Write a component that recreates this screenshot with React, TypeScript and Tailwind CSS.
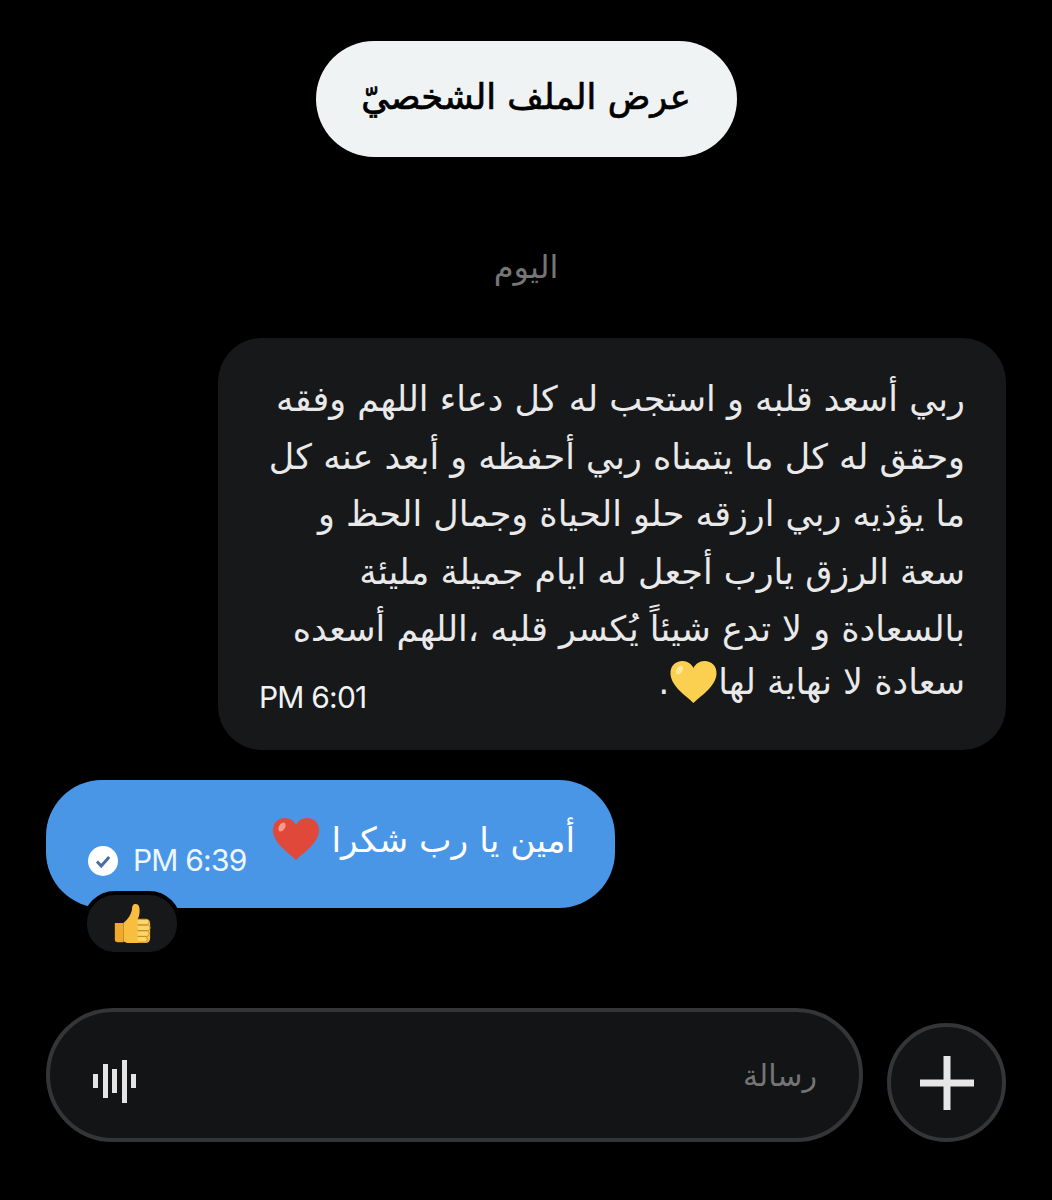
import React from 'react';

const arabic = "font-['DejaVu_Sans','Noto_Sans',sans-serif]";

const lines = [
  'ربي أسعد قلبه و استجب له كل دعاء اللهم وفقه',
  'وحقق له كل ما يتمناه ربي أحفظه و أبعد عنه كل',
  'ما يؤذيه ربي ارزقه حلو الحياة وجمال الحظ و',
  'سعة الرزق يارب أجعل له ايام جميلة مليئة',
  'بالسعادة و لا تدع شيئاً يُكسر قلبه ،اللهم أسعده',
];

function Heart({ color, shine, className }: { color: string; shine: string; className: string }) {
  return (
    <svg viewBox="0 0 48 44" className={className}>
      <path
        d="M24 43C17 36 2 27 1 14 0.5 6 6 1 13 1c5 0 9 3 11 7 2-4 6-7 11-7 7 0 12.500 5 12 13-1 13-16 22-23 29z"
        fill={color}
      />
      <ellipse cx="10" cy="10" rx="3" ry="5" transform="rotate(30 10 10)" fill={shine} />
    </svg>
  );
}

function ThumbsUp() {
  return (
    <svg viewBox="0 0 40 44" className="w-[40px] h-[42px]">
      <path d="M2 21h9v20H5c-2 0-3-1-3-3z" fill="#f0a92c" />
      <path
        d="M11 21c5-4 8-9 9-14 0-4 1-6 4-6 3 0 4 3 4 7 0 4-1 7-2 9h9c3 0 4 2 4 4v16c0 3-2 5-5 5H17c-3 0-4-1-6-2z"
        fill="#f9bd3f"
      />
      <path
        d="M26 17h9c2 0 3 2 3 3s-1 3-3 3h-9M26 23h10c2 0 3 2 3 3s-1 3-3 3H26M26 29h9c2 0 3 2 3 3s-1 3-3 3h-9M26 35h7c2 0 3 2 3 3s-1 3-3 3h-7"
        fill="#fdd66b"
        stroke="#c98a20"
        strokeWidth="1"
      />
    </svg>
  );
}

function CheckBadge() {
  return (
    <svg viewBox="0 0 30 30" className="w-[30px] h-[30px] shrink-0">
      <circle cx="15" cy="15" r="15" fill="#ffffff" />
      <path d="M9 15.500l4.200 4.500 8-9" fill="none" stroke="#4a6f9e" strokeWidth="3" />
    </svg>
  );
}

function Waveform() {
  const bars = [14, 34, 24, 43, 14];
  return (
    <div className="flex items-center gap-[4.500px] mt-[12px]">
      {bars.map((h, i) => (
        <span key={i} className="w-[5px] bg-[#e4e4e4]" style={{ height: h }} />
      ))}
    </div>
  );
}

export default function App() {
  return (
    <div className="w-[1052px] h-[1200px] bg-black overflow-hidden flex flex-col">
      <div className="flex justify-center pt-[41px]">
        <div
          dir="rtl"
          className={`w-[421px] h-[116px] rounded-full bg-[#f0f3f4] text-black text-[35.300px] [-webkit-text-stroke:0.7px_black] pb-[4px] flex items-center justify-center ${arabic}`}
        >
          عرض الملف الشخصيّ
        </div>
      </div>

      <div dir="rtl" className={`mt-[88px] h-[44px] flex items-center justify-center text-[32px] text-[#757575] ${arabic}`}>
        اليوم
      </div>

      <div className="flex justify-end pr-[46px] mt-[49px]">
        <div className="w-[788px] h-[412px] rounded-[44px] bg-[#17181a] pt-[33px] pr-[41px] pl-[41px] text-[#e9e9e9]">
          <div dir="rtl" className={`text-[35px] leading-[57.500px] whitespace-nowrap ${arabic}`}>
            {lines.map((line) => (
              <div key={line}>{line}</div>
            ))}
            <div className="flex items-start justify-between h-[57px]">
              <span className="flex items-center -mt-[5px]">
                سعادة لا نهاية لها
                <Heart color="#fbcf4f" shine="#fde79a" className="w-[49px] h-[44px]" />
                .
              </span>
              <span dir="ltr" className="font-['Inter',sans-serif] text-[30px] leading-[36px] mt-[20px] text-[#f2f2f2] tracking-[-0.8px]">
                PM 6:01
              </span>
            </div>
          </div>
        </div>
      </div>

      <div className="relative pl-[46px] mt-[30px]">
        <div className="w-[569px] h-[128px] rounded-[56px] bg-[#4a96e6] flex items-center justify-between pl-[42px] pr-[40px] text-white">
          <div className="flex items-center gap-[15px] mt-[33px]">
            <CheckBadge />
            <span className="font-['Inter',sans-serif] text-[30px] text-[#eef6ff] tracking-[-0.8px]">PM 6:39</span>
          </div>
          <div dir="rtl" className={`flex items-center gap-[12px] text-[34.500px] mb-[6px] ${arabic}`}>
            <span>أمين يا رب شكرا</span>
            <Heart color="#e0493a" shine="#f59a8e" className="w-[48px] h-[46px] -mt-[4px]" />
          </div>
        </div>
        <div className="absolute left-[83px] top-[111px] w-[98px] h-[65px] rounded-[32px] bg-[#17181a] border-[4px] border-black flex items-center justify-center">
          <ThumbsUp />
        </div>
      </div>

      <div className="flex items-end gap-[24px] pl-[46px] mt-[100px]">
        <div className="w-[817px] h-[134px] rounded-[67px] bg-[#131416] border-[4px] border-[#343537] flex items-center justify-between pl-[43px] pr-[42px]">
          <Waveform />
          <span dir="rtl" className={`text-[30px] text-[#757575] ${arabic}`}>رسالة</span>
        </div>
        <button className="w-[119px] h-[119px] rounded-full bg-[#131416] border-[4px] border-[#343537] flex items-center justify-center">
          <svg viewBox="0 0 54 54" className="w-[54px] h-[54px]">
            <path d="M23.500 0h7v23.500H54v7H30.500V54h-7V30.500H0v-7h23.500z" fill="#e6e6e6" />
          </svg>
        </button>
      </div>
    </div>
  );
}
